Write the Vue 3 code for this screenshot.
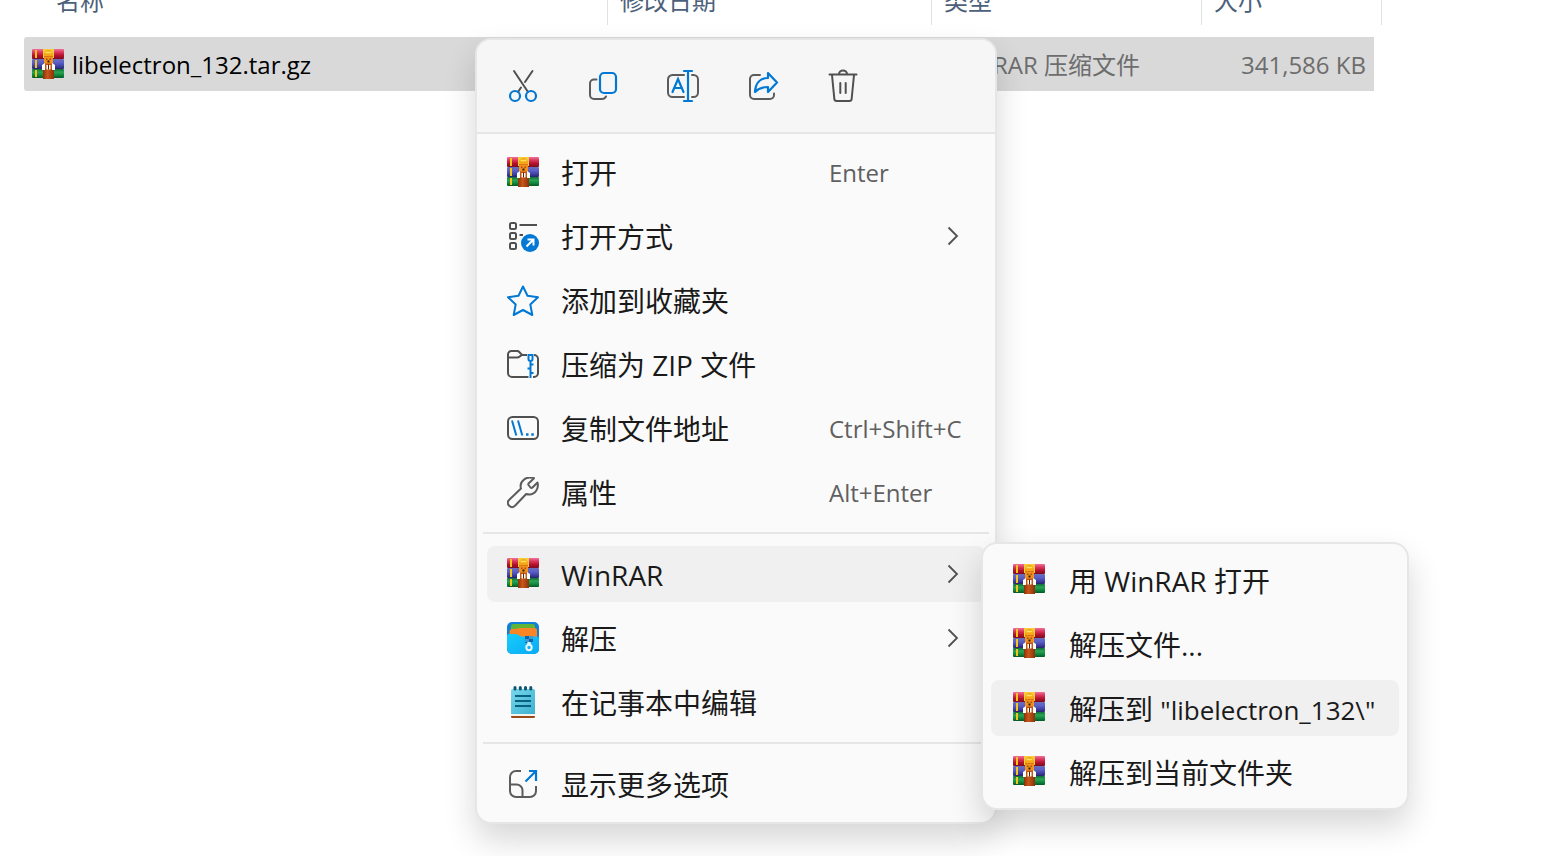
<script setup>
import { ref } from 'vue';

// Files shown in the list behind the menus
const files = ref([
  { id: 1, name: 'libelectron_132.tar.gz', date: '', type: 'WinRAR 压缩文件', size: '341,586 KB' },
]);

// Icon buttons at the top of the context menu
const quickActions = [
  { icon: 'cut', label: '剪切' },
  { icon: 'copy', label: '复制' },
  { icon: 'rename', label: '重命名' },
  { icon: 'share', label: '共享' },
  { icon: 'trash', label: '删除' },
];

// Menu entries, split by the separators
const menuGroups = [
  [
    { icon: 'winrar', label: '打开', shortcut: 'Enter' },
    { icon: 'open-with', label: '打开方式', hasSubmenu: true },
    { icon: 'star', label: '添加到收藏夹' },
    { icon: 'zip-folder', label: '压缩为 ZIP 文件' },
    { icon: 'path', label: '复制文件地址', shortcut: 'Ctrl+Shift+C' },
    { icon: 'wrench', label: '属性', shortcut: 'Alt+Enter' },
  ],
  [
    { icon: 'winrar', label: 'WinRAR', hasSubmenu: true },
    { icon: 'archive', label: '解压', hasSubmenu: true },
    { icon: 'notepad', label: '在记事本中编辑' },
  ],
  [{ icon: 'more', label: '显示更多选项' }],
];

const submenuItems = [
  { label: '用 WinRAR 打开' },
  { label: '解压文件...' },
  { label: '解压到 ', target: '"libelectron_132\\"' },
  { label: '解压到当前文件夹' },
];

const activeItem = ref('WinRAR');
const activeSubitem = ref(2);
</script>

<template>
  <div class="explorer">
    <!-- Shared icon shapes -->
    <svg class="sprite" width="0" height="0" aria-hidden="true">
      <defs>
        <linearGradient id="book-red" x1="0" y1="0" x2="0" y2="1">
          <stop offset="0" stop-color="#f0729a" />
          <stop offset="0.3" stop-color="#dc3a60" />
          <stop offset="0.65" stop-color="#b5122f" />
          <stop offset="1" stop-color="#7d0c1e" />
        </linearGradient>
        <linearGradient id="book-blue" x1="0" y1="0" x2="0" y2="1">
          <stop offset="0" stop-color="#6a6fb8" />
          <stop offset="0.35" stop-color="#5c61c8" />
          <stop offset="0.7" stop-color="#4042a4" />
          <stop offset="1" stop-color="#25256a" />
        </linearGradient>
        <linearGradient id="book-green" x1="0" y1="0" x2="0" y2="1">
          <stop offset="0" stop-color="#0f6c38" />
          <stop offset="0.35" stop-color="#2ba354" />
          <stop offset="0.7" stop-color="#0f853b" />
          <stop offset="1" stop-color="#065523" />
        </linearGradient>
        <linearGradient id="strap" x1="0" y1="0" x2="1" y2="0">
          <stop offset="0" stop-color="#8a3208" />
          <stop offset="0.4" stop-color="#c8571a" />
          <stop offset="1" stop-color="#8a3208" />
        </linearGradient>
        <linearGradient id="folder-front" x1="0" y1="0" x2="1" y2="1">
          <stop offset="0" stop-color="#16cdfd" />
          <stop offset="1" stop-color="#0ba9f2" />
        </linearGradient>
        <linearGradient id="note-page" x1="0" y1="0" x2="1" y2="1">
          <stop offset="0" stop-color="#7ad8ec" />
          <stop offset="1" stop-color="#3bb0cf" />
        </linearGradient>
      </defs>

      <symbol id="icon-winrar" viewBox="0 0 32 32">
        <rect x="1" y="8" width="30" height="21" fill="#2a1a2c" />
        <rect y="0" width="32" height="10" rx="1" fill="url(#book-red)" />
        <rect y="10" width="32" height="10" rx="1" fill="url(#book-blue)" />
        <rect y="20" width="32" height="9" rx="1" fill="url(#book-green)" />
        <path d="M3 1h2v8H3zM3 11h2v8H3zM3 21h2v7H3z" fill="#f5c518" />
        <path d="M11 0h11v9H11z" fill="#f3cf3a" />
        <path d="M11 19h11v11H11z" fill="url(#strap)" />
        <path d="M12 8V5.500C12 2.500 14 1 16.500 1S21 2.500 21 5.500V8z" fill="#f5a61a" />
        <path d="M13.500 3.500h6" stroke="#ffe35a" stroke-width="1.500" />
        <path d="M12 7h9v7l-1.500 2h-6L12 14z" fill="#f0901f" />
        <path d="M12 7.500h9" stroke="#d9780f" stroke-width="1" />
        <path d="M14 9.500h1.500V11H14zM17.500 9.500H19V11h-1.500z" fill="#a14c08" />
        <path d="M15.500 11.500h2v2h-2z" fill="#3a1606" />
        <path d="M10 16l3-2v7h-3zM23 16l-3-2v7h3z" fill="#fff" />
        <path d="M13 14.500h7V20h-7z" fill="#c4560e" />
        <path d="M14.500 16h1.500v4.500h-1.500zM17 16h1.500v4.500H17z" fill="#fff" />
        <path d="M16 15.500h1V20h-1z" fill="#5a1d05" />
      </symbol>

      <symbol id="icon-cut" viewBox="0 0 36 36">
        <g fill="none" stroke="#505050" stroke-width="2" stroke-linecap="round">
          <path d="M9 3l14 21M27.500 3L20 14M16 19.500L13 24" />
          <g stroke="#0078d4" stroke-width="2.200">
            <circle cx="10" cy="28" r="5" />
            <circle cx="26" cy="28" r="5" />
          </g>
        </g>
      </symbol>

      <symbol id="icon-copy" viewBox="0 0 36 36">
        <g fill="none" stroke="#5c5c5c" stroke-width="2" stroke-linecap="round">
          <path d="M11.500 11.500H9a4 4 0 0 0-4 4V27a4 4 0 0 0 4 4h8a4.500 4.500 0 0 0 4-2.500" />
          <rect x="15" y="5" width="16" height="20" rx="4" stroke="#0078d4" stroke-width="2.200" />
        </g>
      </symbol>

      <symbol id="icon-rename" viewBox="0 0 36 36">
        <g fill="none" stroke="#5c5c5c" stroke-width="2" stroke-linecap="round">
          <path d="M19 7H7.500A4.500 4.500 0 0 0 3 11.500v13A4.500 4.500 0 0 0 7.500 29H19M27 7h1.500a4.500 4.500 0 0 1 4.500 4.500v13a4.500 4.500 0 0 1-4.500 4.500H27" />
          <path d="M7.500 24L13 11l5.500 13M9.500 20h7M19 3h8M23 3v30M19 33h8" stroke="#0078d4" stroke-width="2.200" />
        </g>
      </symbol>

      <symbol id="icon-share" viewBox="0 0 36 36">
        <g fill="none" stroke="#5c5c5c" stroke-width="2" stroke-linecap="round" stroke-linejoin="round">
          <path d="M15 7H9a4 4 0 0 0-4 4v16a4 4 0 0 0 4 4h16a4 4 0 0 0 4-4v-1.500" />
          <path d="M23 5l9 9.500-9 9.500v-5c-6 0-9.500 1-13 5 .5-8.500 5-14 13-14z" stroke="#0078d4" stroke-width="2.200" />
        </g>
      </symbol>

      <symbol id="icon-trash" viewBox="0 0 36 36">
        <g fill="none" stroke="#505050" stroke-width="2" stroke-linecap="round">
          <path d="M4.500 6.500h27M14 6a4 3.500 0 0 1 8 0M7 7l2.300 23.500A2.500 2.500 0 0 0 11.800 33h12.400a2.500 2.500 0 0 0 2.500-2.500L29 7M15.300 15v10M20.700 15v10" />
        </g>
      </symbol>

      <symbol id="icon-open-with" viewBox="0 0 32 32">
        <g fill="none" stroke="#505050" stroke-width="2">
          <rect x="3" y="2" width="6" height="6" rx="1.500" />
          <rect x="3" y="12" width="6" height="6" rx="1.500" />
          <rect x="3" y="22" width="6" height="6" rx="1.500" />
          <path d="M12.500 4H30M12.500 14H16" />
        </g>
        <circle cx="23" cy="22" r="9" fill="#0078d4" />
        <path d="M19.500 25.500l7-7M20.500 18.500h6v6" fill="none" stroke="#fff" stroke-width="2" />
      </symbol>

      <symbol id="icon-star" viewBox="0 0 32 32">
        <path d="M16 1.500l4.500 9.300 10.500 1.400-7.700 7.200 2 10.600-9.300-5-9.300 5 2-10.600L1 12.200l10.500-1.400z" fill="none" stroke="#0078d4" stroke-width="2" stroke-linejoin="round" />
      </symbol>

      <symbol id="icon-zip-folder" viewBox="0 0 32 32">
        <g fill="none" stroke="#505050" stroke-width="2">
          <path d="M20 6h-5l-3-3.200A2.500 2.500 0 0 0 10.500 2H4.500A3.500 3.500 0 0 0 1 5.500V24a4 4 0 0 0 4 4h16.500M26 28h1a4 4 0 0 0 4-4V10a4 4 0 0 0-4-4M1.500 8.500h8.500c3 0 3-2.500 5.500-2.500" />
          <path d="M21.500 6v4a2 2 0 0 0 4 0V6zM23.500 12v17M23.500 15.500h3M23.500 19.500h-3M23.500 24h3" stroke="#0078d4" />
        </g>
      </symbol>

      <symbol id="icon-path" viewBox="0 0 32 32">
        <rect x="1" y="4" width="30" height="22" rx="4.500" fill="none" stroke="#505050" stroke-width="2" />
        <path d="M5 7.500l4.300 15M11 7.500l4.300 15" stroke="#0078d4" stroke-width="2" />
        <path d="M19 20.300h2.500v2.500H19zM24.300 20.300h2.500v2.500h-2.500z" fill="#0078d4" />
      </symbol>

      <symbol id="icon-wrench" viewBox="0 0 32 32">
        <path d="M27 1.200l-5.500 5.300a1.500 1.500 0 0 0 0 1.500l2 2.500a1.500 1.500 0 0 0 2 0L30.500 5.500c1.500 5.500-2 12-8 12-1.200 0-2.300-.2-3.300-.5L8 28.800c-4 3.700-9.500-1.800-6-5.800L14 11.500C12 5 18.500-1.500 27 1.200z" fill="none" stroke="#5c5c5c" stroke-width="2" stroke-linejoin="round" />
      </symbol>

      <symbol id="icon-archive" viewBox="0 0 32 32">
        <rect width="32" height="32" rx="5" fill="#0f7fdb" />
        <path d="M4 4a2 2 0 0 1 2-2h20a2 2 0 0 1 2 2v6H4z" fill="#5fb336" />
        <path d="M2.500 9a3 3 0 0 1 3-2H10l2-1h16a2 2 0 0 1 2 2v10H2.500z" fill="#fb8524" />
        <path d="M0 14a2 2 0 0 1 2-2h7.500c2 0 2.500 2.500 5 2.500H30a2 2 0 0 1 2 2V27a5 5 0 0 1-5 5H5a5 5 0 0 1-5-5z" fill="url(#folder-front)" />
        <path d="M18 14h4v3h-4zM22 17h4v3h-4zM18 20h3v1h-3z" fill="#0b63a8" />
        <path d="M22 14h4v3h-4zM18 17h4v3h-4z" fill="#3a9cd2" />
        <path d="M20.500 20h3l.5 3h-4z" fill="#e6f4fb" />
        <circle cx="22" cy="25.500" r="2.700" fill="none" stroke="#e9f5fb" stroke-width="2" />
      </symbol>

      <symbol id="icon-notepad" viewBox="0 0 32 32">
        <path d="M4 27h24v3H4z" fill="#f7f3ef" />
        <path d="M4 30h24v.5a1.500 1.500 0 0 1-1.500 1.500h-21A1.500 1.500 0 0 1 4 30.500z" fill="#9a4a14" />
        <path d="M4 4.500A1.500 1.500 0 0 1 5.500 3h21A1.500 1.500 0 0 1 28 4.500V28H4z" fill="url(#note-page)" />
        <path d="M8 10h16M8 15h16M8 20h16" stroke="#0a6080" stroke-width="2" />
        <path d="M8 1.500V3M13.300 1.500V3M18.500 1.500V3M23.800 1.500V3" stroke="#0d5470" stroke-width="3" stroke-linecap="round" />
      </symbol>

      <symbol id="icon-more" viewBox="0 0 32 32">
        <g fill="none" stroke="#5c5c5c" stroke-width="2">
          <path d="M14 3H9a6 6 0 0 0-6 6v14a6 6 0 0 0 6 6h14a6 6 0 0 0 6-6v-5M3 16.500h6.500a6 6 0 0 1 6 6V29" />
          <path d="M18.500 13.500L29 3M22 3h7v10" stroke="#0078d4" stroke-width="2.200" />
        </g>
      </symbol>

      <symbol id="icon-chevron" viewBox="0 0 12 20">
        <path d="M1.500 1.500L10 10l-8.500 8.500" fill="none" stroke="#505050" stroke-width="1.800" />
      </symbol>
    </svg>

    <!-- File list, scrolled a little under the window edge -->
    <table class="file-list">
      <colgroup>
        <col class="col-name" />
        <col class="col-date" />
        <col class="col-type" />
        <col class="col-size" />
      </colgroup>
      <thead>
        <tr>
          <th scope="col"><div class="heading heading-name">名称</div></th>
          <th scope="col"><div class="heading">修改日期</div></th>
          <th scope="col"><div class="heading">类型</div></th>
          <th scope="col"><div class="heading">大小</div></th>
        </tr>
      </thead>
      <tbody>
        <tr v-for="file in files" :key="file.id">
          <td>
            <div class="file">
              <svg class="icon" aria-hidden="true"><use href="#icon-winrar" /></svg>
              <span>{{ file.name }}</span>
            </div>
          </td>
          <td>{{ file.date }}</td>
          <td class="detail">{{ file.type }}</td>
          <td class="detail size">{{ file.size }}</td>
        </tr>
      </tbody>
    </table>

    <!-- Context menu -->
    <div class="menu context-menu" role="menu">
      <div class="quick-actions">
        <button v-for="action in quickActions" :key="action.icon" type="button" class="quick-button" :aria-label="action.label">
          <svg aria-hidden="true"><use :href="'#icon-' + action.icon" /></svg>
        </button>
      </div>
      <div v-for="(group, index) in menuGroups" :key="index" class="group">
        <button
          v-for="item in group"
          :key="item.label"
          type="button"
          role="menuitem"
          class="item"
          :class="{ active: item.label === activeItem }"
        >
          <svg class="icon" aria-hidden="true"><use :href="'#icon-' + item.icon" /></svg>
          <span class="label">{{ item.label }}</span>
          <span v-if="item.shortcut" class="shortcut">{{ item.shortcut }}</span>
          <svg v-if="item.hasSubmenu" class="chevron" aria-hidden="true"><use href="#icon-chevron" /></svg>
        </button>
      </div>
    </div>

    <!-- WinRAR submenu -->
    <div class="menu submenu" role="menu">
      <button
        v-for="(item, index) in submenuItems"
        :key="item.label"
        type="button"
        role="menuitem"
        class="item"
        :class="{ active: index === activeSubitem }"
        @mouseenter="activeSubitem = index"
      >
        <svg class="icon" aria-hidden="true"><use href="#icon-winrar" /></svg>
        <span class="label">{{ item.label }}<span v-if="item.target" class="target">{{ item.target }}</span></span>
      </button>
    </div>
  </div>
</template>

<style>
body {
  background: #fff;
}
</style>

<style scoped>
.explorer {
  position: relative;
  min-height: 100vh;
  overflow: hidden;
  font-family: "Open Sans", "Noto Sans CJK SC", sans-serif;
  color: #1a1a1a;
}

.sprite {
  position: absolute;
}

.icon {
  flex: none;
  width: 32px;
  height: 32px;
}

/* File list */
.file-list {
  table-layout: fixed;
  width: 1358px;
  margin: -24px 0 0 24px;
  border-spacing: 0;
  font-size: 24px;
  line-height: 32px;
}

.col-name {
  width: 584px;
}

.col-date {
  width: 324px;
}

.col-type {
  width: 270px;
}

.file-list th {
  padding: 0 0 12px;
  font-weight: 400;
  text-align: left;
}

.heading {
  box-sizing: border-box;
  height: 49px;
  padding: 9px 12px 0;
  border-right: 1px solid #e2e2e2;
  color: #4c607a;
}

.heading-name {
  padding-left: 32px;
}

.file-list td {
  height: 52px;
  padding: 2px 0 0 8px;
  background: #d9d9d9;
  color: #000;
}

.file-list td:first-child {
  border-radius: 3px 0 0 3px;
}

.file-list td.detail {
  padding-left: 18px;
  color: #6d6d6d;
}

.file-list td.size {
  padding-right: 8px;
  border-right: 8px solid transparent;
  background-clip: padding-box;
  text-align: right;
}

.file {
  display: flex;
  align-items: center;
  gap: 8px;
}

/* Menus */
.menu {
  position: absolute;
  box-sizing: border-box;
  border: 2px solid #e6e6e6;
  border-radius: 16px;
  background: #fafafa;
  box-shadow: 0 16px 32px rgba(0, 0, 0, 0.16);
}

.context-menu {
  top: 38px;
  left: 475px;
  width: 522px;
}

.submenu {
  top: 542px;
  left: 981px;
  display: flex;
  flex-direction: column;
  gap: 8px;
  width: 428px;
  padding: 8px;
}

.quick-actions {
  display: flex;
  gap: 16px;
  padding: 18px 14px;
  border-bottom: 2px solid #e6e6e6;
  border-radius: 14px 14px 0 0;
  background: #f6f6f6;
}

.quick-button {
  display: flex;
  align-items: center;
  justify-content: center;
  width: 64px;
  height: 56px;
  padding: 0;
  border: none;
  border-radius: 8px;
  background: none;
}

.quick-button svg {
  width: 36px;
  height: 36px;
}

.group {
  display: flex;
  flex-direction: column;
  gap: 8px;
  margin: 0 6px;
  padding: 12px 4px 10px;
}

.group + .group {
  border-top: 2px solid #e6e6e6;
}

.group:nth-child(3) {
  padding-bottom: 12px;
}

.item {
  display: flex;
  align-items: center;
  gap: 22px;
  height: 56px;
  padding: 0 0 2px 20px;
  border: none;
  border-radius: 8px;
  background: none;
  color: #1a1a1a;
  font-family: inherit;
  font-size: 28px;
  line-height: 40px;
  text-align: left;
}

.group + .group .item {
  padding: 2px 0 0 20px;
}

.submenu .item {
  gap: 24px;
  padding: 2px 0 0 22px;
}

.item.active,
.quick-button:hover {
  background: #f0f0f0;
}

.group + .group .icon,
.submenu .icon {
  margin-bottom: 2px;
}

/* The first group follows the toolbar, so its icons are not raised */
.context-menu .quick-actions + .group .icon {
  margin-bottom: 0;
}

.label {
  flex: 1;
  white-space: pre;
}

.target {
  font-size: 26px;
}

.shortcut {
  flex: none;
  width: 156px;
  color: #606060;
  font-size: 24px;
}

.chevron {
  flex: none;
  width: 12px;
  height: 20px;
  margin: 0 26px 2px 0;
}
</style>
